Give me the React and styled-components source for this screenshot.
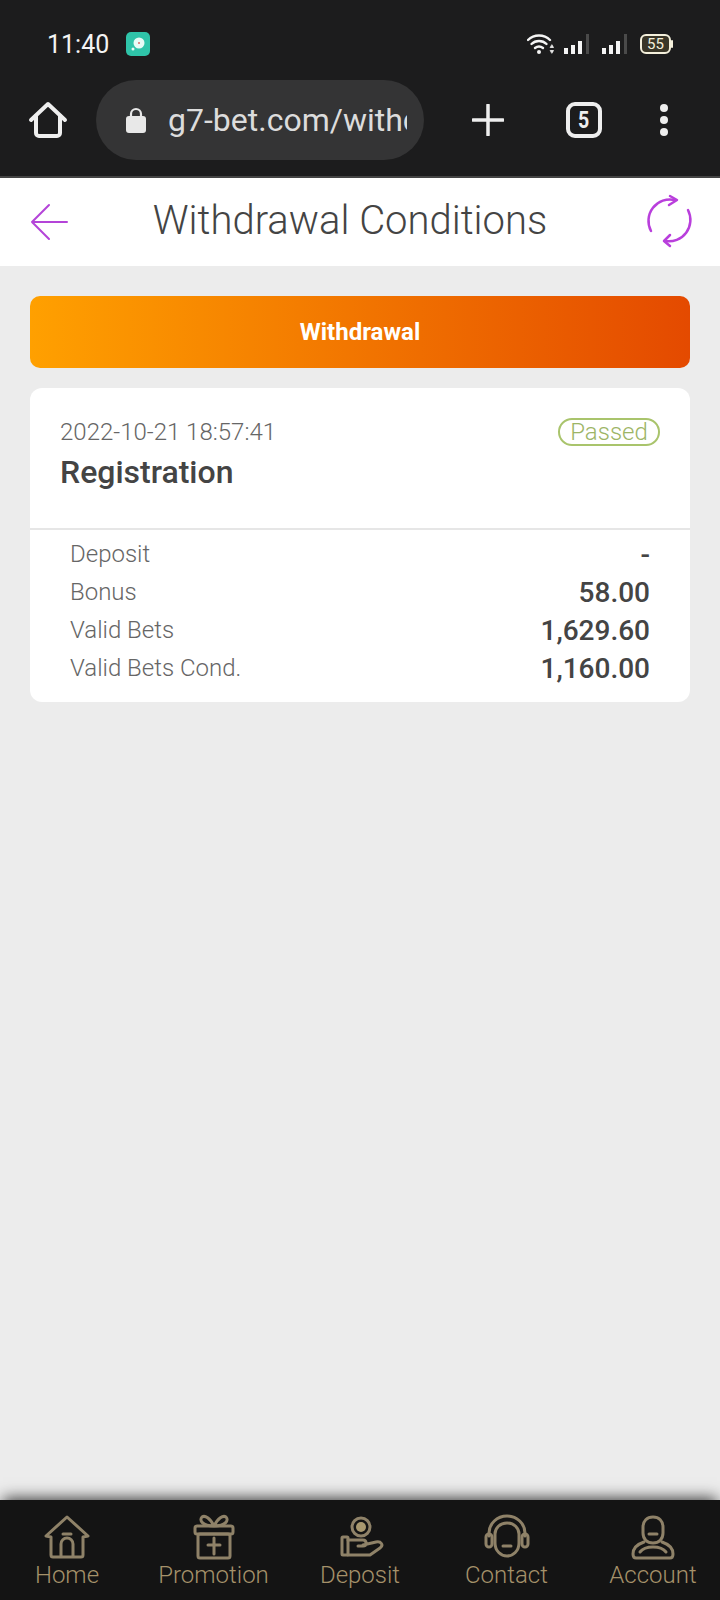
import React from "react";
import styled, { createGlobalStyle } from "styled-components";

const Global = createGlobalStyle`
  html, body { margin: 0; padding: 0; background: #ececec; }
  * { box-sizing: border-box; }
  body { font-family: Roboto, "Noto Sans", sans-serif; }
`;

const Page = styled.div`
  width: 720px;
  height: 1600px;
  display: flex;
  flex-direction: column;
  overflow: hidden;
  background: #ececec;
`;

// phone chrome
const Chrome = styled.div`
  height: 178px;
  flex: none;
  background: #1c1c1d;
  border-bottom: 2px solid #444;
`;

const StatusBar = styled.div`
  height: 80px;
  padding: 8px 46px 0 47px;
  display: flex;
  align-items: center;
  color: #f4f4f4;
`;

const Time = styled.span`
  font-size: 25px;
  width: 79px;
`;

const AppBadge = styled.span`
  width: 24px;
  height: 24px;
  border-radius: 5px;
  background: #2fc4a9;
  display: flex;
  align-items: center;
  justify-content: center;
`;

const StatusIcons = styled.div`
  margin-left: auto;
  display: flex;
  align-items: center;
`;

const IconGap = styled.span`
  width: ${(p) => p.$w}px;
`;

const BrowserBar = styled.div`
  height: 80px;
  padding-left: 28px;
  display: flex;
  align-items: center;
`;

const UrlPill = styled.div`
  width: 328px;
  height: 80px;
  margin-left: 28px;
  padding-left: 30px;
  border-radius: 40px;
  background: #343435;
  display: flex;
  align-items: center;
  gap: 22px;
`;

const LockIcon = styled.svg`
  flex: none;
`;

const UrlText = styled.div`
  width: 239px;
  overflow: hidden;
  white-space: nowrap;
  font-size: 32px;
  color: #dcdcdc;
`;

const PlusSlot = styled.div`
  margin-left: 48px;
  display: flex;
`;

const TabCount = styled.div`
  margin-left: 62px;
  width: 36px;
  height: 36px;
  border: 4px solid #eeeeee;
  border-radius: 9px;
  color: #eeeeee;
  font-size: 23px;
  font-weight: 700;
  display: flex;
  align-items: center;
  justify-content: center;
  span {
    display: block;
    transform: scaleX(0.85);
  }
`;

const Dots = styled.div`
  margin-left: 58px;
  display: flex;
  flex-direction: column;
  gap: 4px;
  span {
    width: 8px;
    height: 8px;
    border-radius: 50%;
    background: #eeeeee;
  }
`;

// page header
const Header = styled.header`
  height: 88px;
  flex: none;
  background: #fff;
  padding: 0 28px 0 30px;
  display: flex;
  align-items: center;
  justify-content: space-between;
`;

const Title = styled.h1`
  margin: 0 16px 4px 0;
  font-size: 40px;
  font-weight: 300;
  color: #444;
`;

const RefreshIcon = styled.svg`
  overflow: visible;
`;

const Main = styled.main`
  flex: 1;
  padding: 30px 30px 0;
  display: flex;
  flex-direction: column;
  gap: 20px;
`;

const WithdrawButton = styled.button`
  height: 72px;
  border: 0;
  border-radius: 10px;
  background: linear-gradient(90deg, #ffa000, #e44a00);
  color: #fff;
  font-family: inherit;
  font-size: 24px;
  font-weight: 700;
`;

const Card = styled.section`
  background: #fff;
  border-radius: 12px;
  padding-bottom: 15px;
`;

const CardTop = styled.div`
  height: 142px;
  padding: 30px 30px 0;
  border-bottom: 2px solid #e6e6e6;
  display: flex;
  align-items: flex-start;
  justify-content: space-between;
`;

const DateText = styled.div`
  font-size: 24px;
  font-weight: 300;
  color: #666;
  line-height: 28px;
`;

const CardTitle = styled.div`
  margin-top: 7px;
  font-size: 32px;
  font-weight: 500;
  color: #444;
  line-height: 38px;
`;

const Passed = styled.span`
  height: 28px;
  width: 102px;
  border: 2px solid #a9c46c;
  border-radius: 14px;
  color: #9db566;
  font-size: 24px;
  font-weight: 300;
  display: flex;
  align-items: center;
  justify-content: center;
`;

const Rows = styled.div`
  padding: 5px 40px 0;
`;

const Row = styled.div`
  height: 38px;
  display: flex;
  align-items: center;
  justify-content: space-between;
`;

const RowLabel = styled.span`
  font-size: 24px;
  font-weight: 300;
  color: #666;
`;

const RowValue = styled.span`
  font-size: 28px;
  font-weight: 500;
  color: #444;
`;

// bottom tabs
const Nav = styled.nav`
  height: 100px;
  flex: none;
  background: #141414;
  display: grid;
  grid-template-columns: repeat(5, 146.5px);
  justify-content: center;
  box-shadow: 0 -5px 14px -3px rgba(0, 0, 0, 0.75);
  position: relative;
`;

const NavItem = styled.div`
  display: flex;
  flex-direction: column;
  align-items: center;
  padding-top: 14px;
`;

const NavIcon = styled.svg`
  width: 48px;
  height: 46px;
  fill: none;
  stroke: #8f8268;
  stroke-width: 3;
  stroke-linecap: round;
  stroke-linejoin: round;
`;

const NavLabel = styled.span`
  font-size: 24px;
  font-weight: 300;
  line-height: 30px;
  color: #a5916a;
  white-space: nowrap;
`;

const HomeGlyph = () => (
  <NavIcon viewBox="0 0 48 46">
    <path d="M3 22 24 3l21 19-5 1v18a2 2 0 0 1-2 2H10a2 2 0 0 1-2-2V23z" />
    <path d="M18 42V30a6 6 0 0 1 12 0v12" />
    <path d="M20 20h8" />
  </NavIcon>
);

const GiftGlyph = () => (
  <NavIcon viewBox="0 0 48 46">
    <rect x="5" y="12" width="38" height="8" rx="2" />
    <rect x="8" y="20" width="32" height="24" rx="2" />
    <path d="M24 12c-4-8-9-11-12-9-3 3 0 9 12 9zM24 12c4-8 9-11 12-9 3 3 0 9-12 9z" />
    <path d="M24 24v16M18 31h12" />
  </NavIcon>
);

const DepositGlyph = () => (
  <NavIcon viewBox="0 0 48 46">
    <circle cx="25" cy="13" r="9" />
    <circle cx="25" cy="13" r="5" fill="#a8986f" stroke="none" />
    <rect x="6" y="23" width="6" height="18" rx="1" />
    <path d="M12 26h15c4 0 4 6 0 6h-5M27 31l13-3c5-1 8 3 4 6l-10 7H12" />
  </NavIcon>
);

const ContactGlyph = () => (
  <NavIcon viewBox="0 0 48 46">
    <path d="M6 22v-3a18 17 0 0 1 36 0v3" />
    <rect x="3" y="20" width="6" height="13" rx="3" />
    <rect x="39" y="20" width="6" height="13" rx="3" />
    <path d="M12 20c0-6 5-11 12-11s12 5 12 11v9c0 8-6 13-12 13s-12-5-12-13z" />
    <path d="M20 32h8" />
  </NavIcon>
);

const AccountGlyph = () => (
  <NavIcon viewBox="0 0 48 46">
    <path d="M14 13c0-6 4-10 10-10s10 4 10 10v6c0 6-4 10-10 10s-10-4-10-10z" />
    <path d="M20 20h8" />
    <path d="M15 28c-6 2-11 6-11 12 0 3 1 4 3 4h34c2 0 3-1 3-4 0-6-5-10-11-12" />
    <path d="M11 38c3-4 7-5 13-5s10 1 13 5" />
  </NavIcon>
);

const tabs = [
  { label: "Home", Glyph: HomeGlyph },
  { label: "Promotion", Glyph: GiftGlyph },
  { label: "Deposit", Glyph: DepositGlyph },
  { label: "Contact", Glyph: ContactGlyph },
  { label: "Account", Glyph: AccountGlyph },
];

const rows = [
  ["Deposit", "-"],
  ["Bonus", "58.00"],
  ["Valid Bets", "1,629.60"],
  ["Valid Bets Cond.", "1,160.00"],
];

const Signal = () => (
  <svg width="26" height="22" viewBox="0 0 26 22">
    <rect x="0" y="15" width="4" height="6" fill="#f4f4f4" />
    <rect x="7" y="12" width="4" height="9" fill="#f4f4f4" />
    <rect x="14" y="8" width="4" height="13" fill="#f4f4f4" />
    <rect x="22" y="1" width="3" height="20" fill="#4a4a4a" />
  </svg>
);

export default function App() {
  return (
    <Page>
      <Global />
      <Chrome>
        <StatusBar>
          <Time>11:40</Time>
          <AppBadge>
            <svg width="16" height="16" viewBox="0 0 16 16">
              <circle cx="9" cy="7" r="5.5" fill="#e8fbf6" />
              <circle cx="9" cy="7" r="1" fill="#d66" />
              <circle cx="3" cy="13" r="1.5" fill="#e8fbf6" />
            </svg>
          </AppBadge>
          <StatusIcons>
            <svg width="28" height="22" viewBox="0 0 28 22" fill="none" stroke="#f4f4f4" strokeWidth="2.4" strokeLinecap="round">
              <path d="M1 7c6-6 16-6 22 0" />
              <path d="M4.500 11c4-4 11-4 15 0" />
              <path d="M8 15c2.500-2 5.500-2 8 0" />
              <circle cx="12" cy="19" r="2" fill="#f4f4f4" stroke="none" />
              <path d="M25 12l1.500 2.500h-3zM25 20l1.500-2.500h-3z" fill="#f4f4f4" strokeWidth="0.8" />
            </svg>
            <IconGap $w={9} />
            <Signal />
            <IconGap $w={12} />
            <Signal />
            <IconGap $w={12} />
            <svg width="34" height="20" viewBox="0 0 34 20">
              <rect x="1" y="1" width="29" height="18" rx="5" fill="#3a3628" stroke="#f4f0dc" strokeWidth="2" />
              <rect x="31" y="6" width="2" height="8" rx="1" fill="#f4f0dc" />
              <text x="15.500" y="15" fontSize="15" fontFamily="Roboto" fill="#f4f0dc" textAnchor="middle">55</text>
            </svg>
          </StatusIcons>
        </StatusBar>
        <BrowserBar>
          <svg width="40" height="38" viewBox="0 0 40 38" fill="none" stroke="#eeeeee" strokeWidth="4" strokeLinecap="round" strokeLinejoin="round">
            <path d="M3 19 20 3l17 16" />
            <path d="M8 15v17a3 3 0 0 0 3 3h18a3 3 0 0 0 3-3V15" />
          </svg>
          <UrlPill>
            <LockIcon width="20" height="26" viewBox="0 0 20 26">
              <path d="M5 10V7a5 5 0 0 1 10 0v3" fill="none" stroke="#e8e8e8" strokeWidth="2.200" />
              <rect x="0" y="9" width="20" height="17" rx="3" fill="#e8e8e8" />
            </LockIcon>
            <UrlText>g7-bet.com/withdrawal</UrlText>
          </UrlPill>
          <PlusSlot>
            <svg width="32" height="32" viewBox="0 0 32 32" stroke="#eeeeee" strokeWidth="3.500" strokeLinecap="round">
              <path d="M16 1v30M1 16h30" />
            </svg>
          </PlusSlot>
          <TabCount>
            <span>5</span>
          </TabCount>
          <Dots>
            <span />
            <span />
            <span />
          </Dots>
        </BrowserBar>
      </Chrome>

      <Header>
        <svg width="38" height="38" viewBox="0 0 38 38" fill="none" stroke="#b444d8" strokeWidth="2" strokeLinecap="round" strokeLinejoin="round">
          <path d="M19 2 2 19l17 17M2 19h35" />
        </svg>
        <Title>Withdrawal Conditions</Title>
        <RefreshIcon width="44" height="54" viewBox="0 0 44 54" fill="none" stroke="#b93fdc" strokeWidth="2.500" strokeLinecap="round" strokeLinejoin="round">
          <path d="M3 36A21.500 21.500 0 0 1 27 5" />
          <path d="M22 1l7 4-8 5" />
          <path d="M40 15A21.500 21.500 0 0 1 17 46" />
          <path d="M22 40l-6 6 6 5" />
        </RefreshIcon>
      </Header>

      <Main>
        <WithdrawButton>Withdrawal</WithdrawButton>
        <Card>
          <CardTop>
            <div>
              <DateText>2022-10-21 18:57:41</DateText>
              <CardTitle>Registration</CardTitle>
            </div>
            <Passed>Passed</Passed>
          </CardTop>
          <Rows>
            {rows.map(([label, value]) => (
              <Row key={label}>
                <RowLabel>{label}</RowLabel>
                <RowValue>{value}</RowValue>
              </Row>
            ))}
          </Rows>
        </Card>
      </Main>

      <Nav>
        {tabs.map(({ label, Glyph }) => (
          <NavItem key={label}>
            <Glyph />
            <NavLabel>{label}</NavLabel>
          </NavItem>
        ))}
      </Nav>
    </Page>
  );
}
